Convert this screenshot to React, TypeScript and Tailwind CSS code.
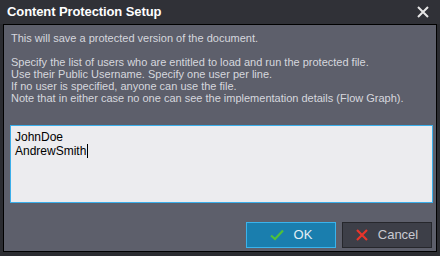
export default function App() {
  const users = ["JohnDoe", "AndrewSmith"];

  return (
    <div
      className="flex h-[256px] w-[440px] flex-col bg-[#2b2c31] text-[11px]"
      style={{ fontFamily: '"Liberation Sans", Arial, sans-serif' }}
    >
      <div className="flex h-[24px] items-center justify-between bg-[#303137] pl-[7px] pr-[10px]">
        <span className="text-[13px] font-bold tracking-[-0.1px] text-white">Content Protection Setup</span>
        <svg width="14" height="14" viewBox="0 0 14 14">
          <path d="M2 2 L12 12 M12 2 L2 12" stroke="#e6e6e6" strokeWidth="2" />
        </svg>
      </div>
      <div className="mx-[3px] mb-[4px] flex flex-1 flex-col border border-black bg-[#5d5f6b] pl-[6px] pr-[3px] pt-[6px]">
        <p className="pl-[1px] leading-[14px] text-[#d6d7de]">
          This will save a protected version of the document.
        </p>
        <div className="mt-[11px] pl-[1px] leading-[12px] text-[#d6d7de]">
          <p>Specify the list of users who are entitled to load and run the protected file.</p>
          <p>Use their Public Username. Specify one user per line.</p>
          <p>If no user is specified, anyone can use the file.</p>
          <p>Note that in either case no one can see the implementation details (Flow Graph).</p>
        </div>
        <div className="mt-[21px] h-[78px] w-full border border-[#3aaeea] bg-[#ececef] px-[4px] pt-[5px] text-[12px] leading-[13px] text-black">
          {users.map((u, i) => (
            <div key={u} className="flex items-center">
              {u}
              {i === users.length - 1 && <span className="ml-[1px] h-[14px] w-px bg-black" />}
            </div>
          ))}
        </div>
        <div className="mt-[19px] flex justify-end gap-[6px] pr-[1px]">
          <button className="flex h-[26px] w-[90px] items-center justify-center gap-[10px] border border-[#3ab3ec] bg-[#1a7eae] text-[13px] text-[#e4eef4]">
            <svg width="14" height="12" viewBox="0 0 14 12">
              <path d="M1 6.5 L5 10 L13 1.5" stroke="#4fc13a" strokeWidth="2.2" fill="none" />
            </svg>
            OK
          </button>
          <button className="flex h-[26px] w-[90px] items-center justify-center gap-[10px] border border-[#26272c] bg-[#3d3f48] text-[13px] text-[#c9cad2]">
            <svg width="12" height="12" viewBox="0 0 12 12">
              <path d="M1 1 L11 11 M11 1 L1 11" stroke="#e8352b" strokeWidth="2.2" />
            </svg>
            Cancel
          </button>
        </div>
      </div>
    </div>
  );
}
